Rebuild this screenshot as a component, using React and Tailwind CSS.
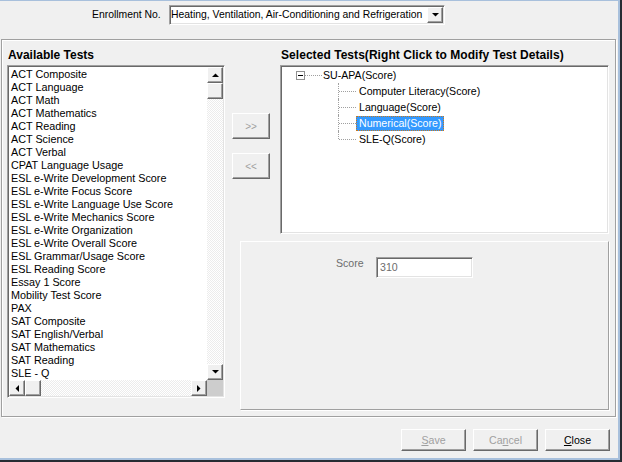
import React from 'react';

const TESTS = [
  'ACT Composite',
  'ACT Language',
  'ACT Math',
  'ACT Mathematics',
  'ACT Reading',
  'ACT Science',
  'ACT Verbal',
  'CPAT Language Usage',
  'ESL e-Write Development Score',
  'ESL e-Write Focus Score',
  'ESL e-Write Language Use Score',
  'ESL e-Write Mechanics Score',
  'ESL e-Write Organization',
  'ESL e-Write Overall Score',
  'ESL Grammar/Usage Score',
  'ESL Reading Score',
  'Essay 1 Score',
  'Mobility Test Score',
  'PAX',
  'SAT Composite',
  'SAT English/Verbal',
  'SAT Mathematics',
  'SAT Reading',
  'SLE - Q',
];

const CHILDREN = ['Computer Literacy(Score)', 'Language(Score)', 'Numerical(Score)', 'SLE-Q(Score)'];

const raised = 'border border-t-white border-l-white border-r-[#696969] border-b-[#696969] shadow-[inset_-1px_-1px_0_#a0a0a0]';
const sunken = 'border border-t-[#a0a0a0] border-l-[#a0a0a0] border-r-white border-b-white shadow-[inset_1px_1px_0_#696969,inset_-1px_-1px_0_#e3e3e3]';

const Tri = ({ dir }) => {
  const pts = {
    up: '0,4 7,4 3.5,0.5',
    down: '0,0 7,0 3.5,3.5',
    left: '4,0 4,7 0.5,3.5',
    right: '0,0 0,7 3.5,3.5',
  }[dir];
  const vertical = dir === 'up' || dir === 'down';
  return (
    <svg width={vertical ? 7 : 4} height={vertical ? 4 : 7} viewBox={vertical ? '0 0 7 4' : '0 0 4 7'}>
      <polygon points={pts} fill="#000" />
    </svg>
  );
};

const ScrollBtn = ({ dir }) => (
  <div className={`w-[16px] h-[16px] shrink-0 bg-[#f0f0f0] flex items-center justify-center ${raised}`}>
    <Tri dir={dir} />
  </div>
);

const Thumb = () => <div className={`w-[16px] h-[16px] shrink-0 bg-[#f0f0f0] ${raised}`} />;

const track = 'bg-[repeating-conic-gradient(#ffffff_0%_25%,#ececec_0%_50%)] bg-[length:2px_2px]';

const DialogButton = ({ children, disabled }) => (
  <button
    className={`w-[65px] h-[22px] bg-[#f0f0f0] text-[10.6px] leading-none flex items-center justify-center ${raised} ${disabled ? 'text-[#a0a0a0]' : 'text-black'}`}
  >
    {children}
  </button>
);

const App = () => {
  return (
    <div className="w-[622px] h-[462px] bg-[#262c33] font-['Liberation_Sans',Arial,sans-serif] text-black select-none">
      <div className="w-[620px] h-[460px] bg-[#f0f0f0] border-t border-r-2 border-b-2 border-[#a8c0dc] flex flex-col">
        {/* enrollment row */}
        <div className="flex items-center mt-[4px] h-[20px]">
          <span className="ml-[92px] w-[69px] text-[10.4px] leading-none whitespace-nowrap">Enrollment No.</span>
          <div className={`ml-[8px] w-[276px] h-[20px] bg-white flex items-center pl-[1px] pr-[1px] ${sunken}`}>
            <span className="flex-1 text-[10.4px] leading-none whitespace-nowrap overflow-hidden">Heating, Ventilation, Air-Conditioning and Refrigeration</span>
            <div className={`w-[16px] h-[16px] bg-[#f0f0f0] flex items-center justify-center ${raised}`}>
              <Tri dir="down" />
            </div>
          </div>
        </div>

        {/* group box */}
        <div className="ml-[1px] mt-[14px] w-[615px] h-[378px] border border-[#a0a0a0] shadow-[inset_1px_1px_0_#fff,1px_1px_0_#fff] flex flex-col">
          <div className="flex mt-[9px] h-[13px] text-[12px] font-bold leading-[13px] whitespace-nowrap">
            <span className="ml-[6px] w-[273px]">Available Tests</span>
            <span className="tracking-[0.05px]">Selected Tests(Right Click to Modify Test Details)</span>
          </div>

          <div className="flex items-start mt-[3px]">
            {/* available list */}
            <div className={`ml-[5px] w-[218px] h-[333px] bg-white flex flex-col p-[1px] ${sunken}`}>
              <div className="flex h-[313px]">
                <div className="w-[198px] h-[313px] overflow-hidden pl-[2px] pt-[1px]">
                  {TESTS.map((t) => (
                    <div key={t} className="h-[13px] leading-[13px] text-[10.8px] whitespace-nowrap">{t}</div>
                  ))}
                </div>
                <div className={`w-[16px] h-[313px] flex flex-col ${track}`}>
                  <ScrollBtn dir="up" />
                  <Thumb />
                  <div className="flex-1" />
                  <ScrollBtn dir="down" />
                </div>
              </div>
              <div className="flex h-[16px]">
                <div className={`w-[198px] h-[16px] flex ${track}`}>
                  <ScrollBtn dir="left" />
                  <Thumb />
                  <div className="flex-1" />
                  <ScrollBtn dir="right" />
                </div>
                <div className="w-[16px] h-[16px] bg-[#cdcdcd]" />
              </div>
            </div>

            {/* right side */}
            <div className="ml-[7px] flex flex-col">
              <div className="flex items-start">
                <div className="w-[38px] flex flex-col gap-[14px] pt-[48px]">
                  <button className={`w-[38px] h-[26px] bg-[#f0f0f0] text-[10px] text-[#a0a0a0] flex items-center justify-center ${raised}`}>&gt;&gt;</button>
                  <button className={`w-[38px] h-[26px] bg-[#f0f0f0] text-[10px] text-[#a0a0a0] flex items-center justify-center ${raised}`}>&lt;&lt;</button>
                </div>

                {/* tree */}
                <div className={`ml-[10px] w-[329px] h-[169px] bg-white p-[1px] text-[10.6px] ${sunken}`}>
                  <div className="flex items-center h-[16px] pl-[14px]">
                    <div className="w-[9px] h-[9px] border border-[#919191] bg-white flex items-center justify-center">
                      <div className="w-[5px] h-[1px] bg-black" />
                    </div>
                    <div className="w-[17px] h-0 border-t border-dotted border-[#a0a0a0]" />
                    <span className="px-[1px] leading-none whitespace-nowrap">SU-APA(Score)</span>
                  </div>
                  {CHILDREN.map((c, i) => {
                    const last = i === CHILDREN.length - 1;
                    const selected = c === 'Numerical(Score)';
                    return (
                      <div key={c} className="flex items-center h-[16px] pl-[56px]">
                        <div className={`w-[1px] border-l border-dotted border-[#a0a0a0] ${last ? 'h-[8px] self-start' : 'self-stretch'}`} />
                        <div className="w-[17px] h-0 border-t border-dotted border-[#a0a0a0]" />
                        <span
                          className={`h-[15px] flex items-center px-[2px] border whitespace-nowrap leading-none ${selected ? 'bg-[#3399ff] text-white border-dotted border-[#c8781e]' : 'border-transparent'}`}
                        >
                          {c}
                        </span>
                      </div>
                    );
                  })}
                </div>
              </div>

              {/* detail panel */}
              <div className="mt-[7px] ml-[8px] w-[369px] h-[169px] border border-t-white border-l-white border-r-[#a0a0a0] border-b-[#a0a0a0] shadow-[1px_1px_0_#fff] flex flex-col">
                <div className="flex items-start mt-[15px] ml-[95px]">
                  <span className="w-[40px] text-[10.6px] leading-[12px] text-[#6d6d6d]">Score</span>
                  <div className={`w-[97px] h-[21px] bg-white flex items-center pl-[3px] text-[10.6px] text-[#6d6d6d] ${sunken}`}>310</div>
                </div>
              </div>
            </div>
          </div>
        </div>

        {/* dialog buttons */}
        <div className="flex justify-end gap-[7px] mt-[12px] mr-[8px]">
          <DialogButton disabled><span><span className="underline">S</span>ave</span></DialogButton>
          <DialogButton disabled><span>Ca<span className="underline">n</span>cel</span></DialogButton>
          <DialogButton><span><span className="underline">C</span>lose</span></DialogButton>
        </div>
      </div>
    </div>
  );
};

export default App;
